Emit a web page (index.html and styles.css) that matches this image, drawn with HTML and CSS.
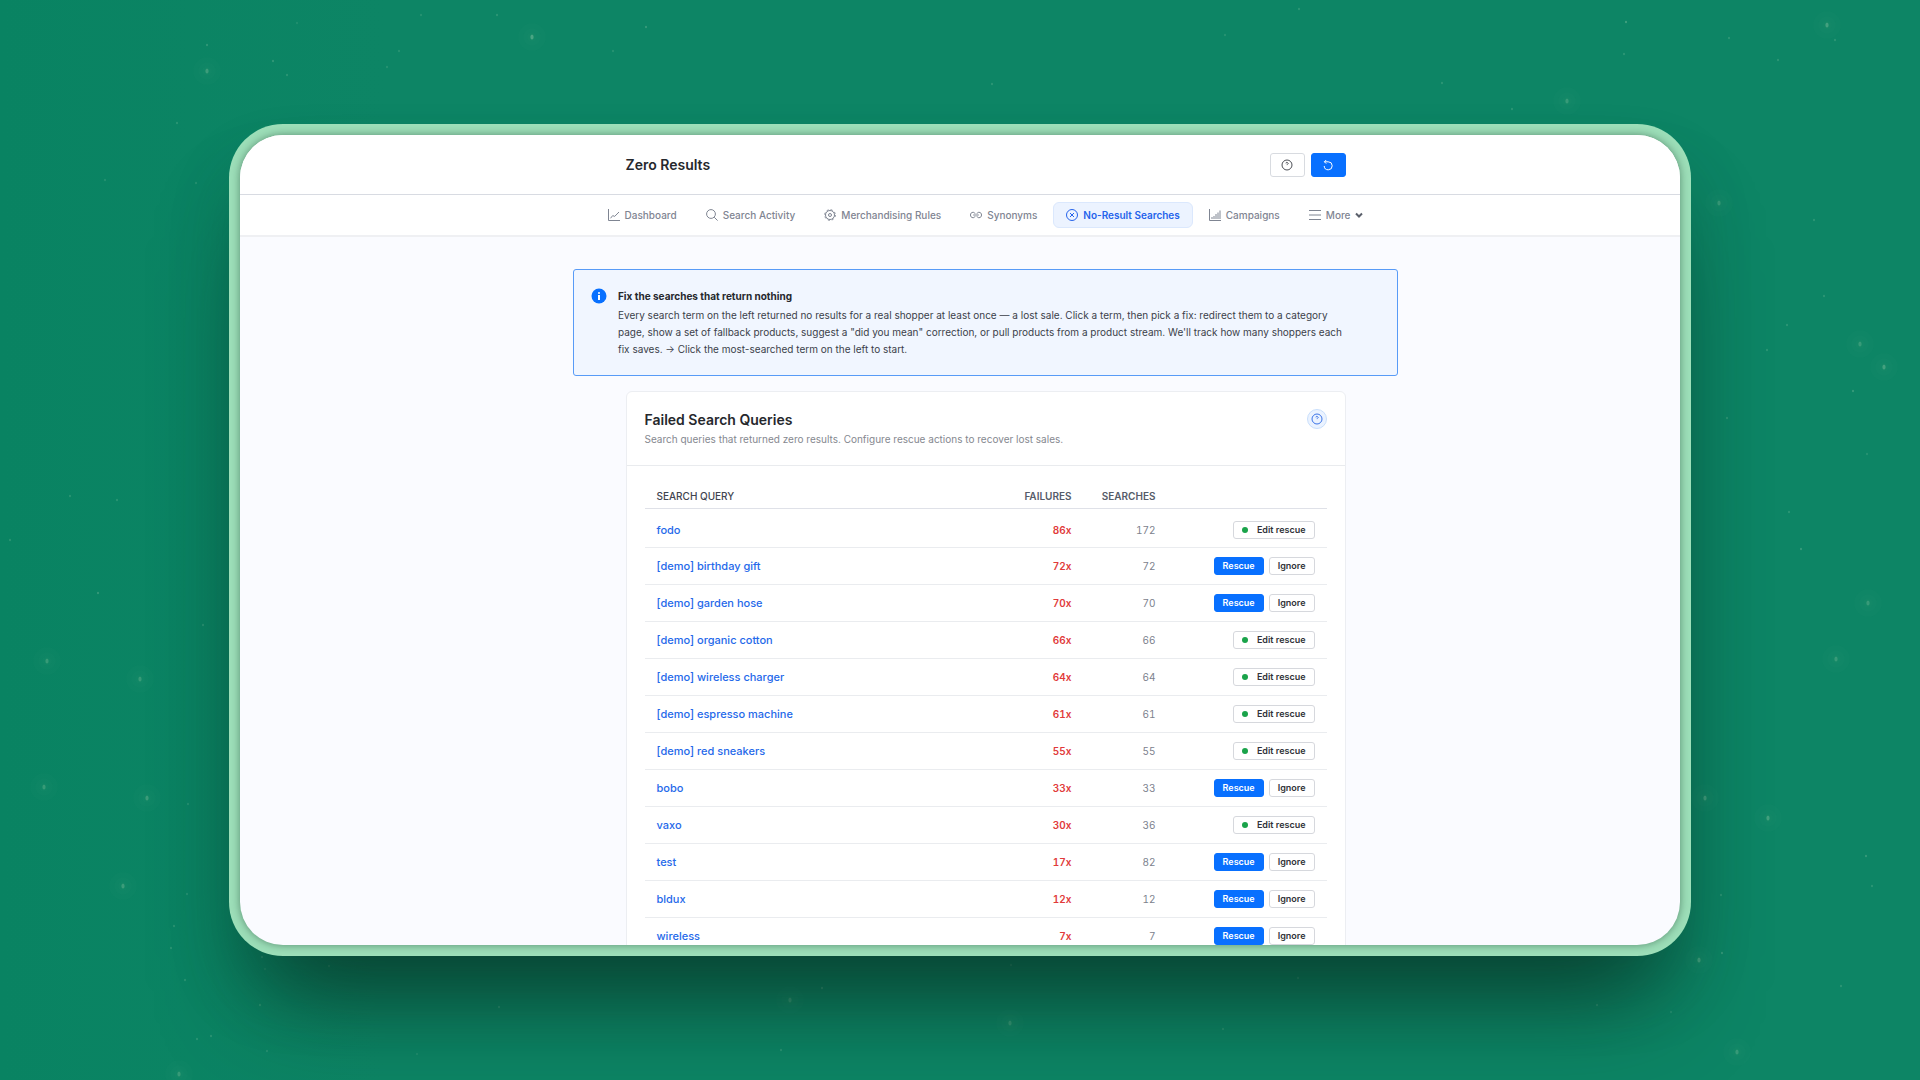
FILE: index.html
```html
<!DOCTYPE html>
<html lang="en">
<head>
<meta charset="utf-8">
<title>Zero Results</title>
<link rel="stylesheet" href="styles.css">
</head>
<body>
<svg class="stars" viewBox="0 0 1920 1080" preserveAspectRatio="xMidYMid slice" aria-hidden="true" id="stars"></svg>
<div class="stage">
<div class="frame">
<div class="app">
  <header class="topbar">
    <div class="column topbar-row">
      <h1 class="page-title">Zero Results</h1>
      <div class="topbar-actions">
        <button class="icon-btn" type="button" aria-label="Help"><svg viewBox="0 0 12 12"><circle cx="6" cy="6" r="5"/><path d="M5 4.400a1 1 0 1 1 1.500.9c-.4.200-.5.400-.5.800"/></svg></button>
        <button class="icon-btn icon-btn-primary" type="button" aria-label="Reload"><svg viewBox="0 0 12 12"><path d="M2.400 2.800H6.200a4 4 0 1 1-4 4.200M4.200 1 2.400 2.800l1.800 1.800"/></svg></button>
      </div>
    </div>
  </header>
  <nav class="nav">
    <a class="nav-item" href="#"><svg viewBox="0 0 12 12"><path d="M.5 0v11.500H12M2.500 9.300l2.200-2.700 2 .8L11 3"/></svg>Dashboard</a>
    <a class="nav-item" href="#"><svg viewBox="0 0 12 12"><circle cx="5" cy="5" r="4.400"/><path d="m8.200 8.200 3.400 3.400"/></svg>Search Activity</a>
    <a class="nav-item" href="#"><svg viewBox="0 0 12 12"><circle cx="6" cy="6" r="4.500"/><circle cx="6" cy="6" r="5.300" stroke-dasharray="2.080 2.080"/><circle cx="6" cy="6" r="1.500"/></svg>Merchandising Rules</a>
    <a class="nav-item" href="#"><svg viewBox="0 0 12 12"><path d="M5 7.200C4.800 8.300 4.100 8.700 3 8.700 1.300 8.700.5 7.500.5 6S1.300 3.300 3 3.300c1.100 0 1.800.4 2 1.500M7 4.800c.2-1.100.9-1.500 2-1.500 1.700 0 2.500 1.200 2.500 2.700S10.700 8.700 9 8.700c-1.100 0-1.800-.4-2-1.500M3.200 6h5.600"/></svg>Synonyms</a>
    <a class="nav-item nav-item-active" href="#" aria-current="page"><svg viewBox="0 0 12 12"><circle cx="6" cy="6" r="5.500"/><path d="m4 4 4 4m0-4L4 8"/></svg>No-Result Searches</a>
    <a class="nav-item" href="#"><svg viewBox="0 0 12 12"><path d="M.5 0v11.500H12M3 8v2m2-3v3m2-5v5m2-6.500V10m2-8.500V10"/></svg>Campaigns</a>
    <button class="nav-item" type="button"><svg viewBox="0 0 12 12"><path d="M0 1.500h12M0 6h12M0 10.500h12"/></svg>More<svg class="chevron" viewBox="0 0 8 8"><path d="m1 2.500 3 3 3-3"/></svg></button>
  </nav>
  <main class="content">
    <section class="notice">
      <svg class="notice-icon" viewBox="0 0 16 16" aria-hidden="true"><circle cx="8" cy="8" r="7.500" fill="#0870ff"/><circle cx="8" cy="5" r="1" fill="#fff"/><path d="M7 7h2v5H7z" fill="#fff"/></svg>
      <div>
        <h2 class="notice-title">Fix the searches that return nothing</h2>
        <p class="notice-text">Every search term on the left returned no results for a real shopper at least once — a lost sale. Click a term, then pick a fix: redirect them to a category page, show a set of fallback products, suggest a "did you mean" correction, or pull products from a product stream. We'll track how many shoppers each fix saves. → Click the most-searched term on the left to start.</p>
      </div>
    </section>
    <section class="column card">
      <div class="card-head">
        <div>
          <h2 class="card-title">Failed Search Queries</h2>
          <p class="card-sub">Search queries that returned zero results. Configure rescue actions to recover lost sales.</p>
        </div>
        <button class="help" type="button" aria-label="Help"><svg viewBox="0 0 12 12"><circle cx="6" cy="6" r="5"/><path d="M5 4.400a1 1 0 1 1 1.500.9c-.4.200-.5.400-.5.800"/></svg></button>
      </div>
      <div class="card-body">
        <table class="queries">
          <thead><tr><th>Search query</th><th class="num">Failures</th><th class="num">Searches</th><th class="acts"></th></tr></thead>
          <tbody>
            <tr><td><a href="#">fodo</a></td><td class="num fail">86x</td><td class="num">172</td><td class="acts"><button class="btn" type="button"><span class="dot"></span>Edit rescue</button></td></tr>
            <tr><td><a href="#">[demo] birthday gift</a></td><td class="num fail">72x</td><td class="num">72</td><td class="acts"><button class="btn btn-primary" type="button">Rescue</button><button class="btn" type="button">Ignore</button></td></tr>
            <tr><td><a href="#">[demo] garden hose</a></td><td class="num fail">70x</td><td class="num">70</td><td class="acts"><button class="btn btn-primary" type="button">Rescue</button><button class="btn" type="button">Ignore</button></td></tr>
            <tr><td><a href="#">[demo] organic cotton</a></td><td class="num fail">66x</td><td class="num">66</td><td class="acts"><button class="btn" type="button"><span class="dot"></span>Edit rescue</button></td></tr>
            <tr><td><a href="#">[demo] wireless charger</a></td><td class="num fail">64x</td><td class="num">64</td><td class="acts"><button class="btn" type="button"><span class="dot"></span>Edit rescue</button></td></tr>
            <tr><td><a href="#">[demo] espresso machine</a></td><td class="num fail">61x</td><td class="num">61</td><td class="acts"><button class="btn" type="button"><span class="dot"></span>Edit rescue</button></td></tr>
            <tr><td><a href="#">[demo] red sneakers</a></td><td class="num fail">55x</td><td class="num">55</td><td class="acts"><button class="btn" type="button"><span class="dot"></span>Edit rescue</button></td></tr>
            <tr><td><a href="#">bobo</a></td><td class="num fail">33x</td><td class="num">33</td><td class="acts"><button class="btn btn-primary" type="button">Rescue</button><button class="btn" type="button">Ignore</button></td></tr>
            <tr><td><a href="#">vaxo</a></td><td class="num fail">30x</td><td class="num">36</td><td class="acts"><button class="btn" type="button"><span class="dot"></span>Edit rescue</button></td></tr>
            <tr><td><a href="#">test</a></td><td class="num fail">17x</td><td class="num">82</td><td class="acts"><button class="btn btn-primary" type="button">Rescue</button><button class="btn" type="button">Ignore</button></td></tr>
            <tr><td><a href="#">bldux</a></td><td class="num fail">12x</td><td class="num">12</td><td class="acts"><button class="btn btn-primary" type="button">Rescue</button><button class="btn" type="button">Ignore</button></td></tr>
            <tr><td><a href="#">wireless</a></td><td class="num fail">7x</td><td class="num">7</td><td class="acts"><button class="btn btn-primary" type="button">Rescue</button><button class="btn" type="button">Ignore</button></td></tr>
          </tbody>
        </table>
      </div>
    </section>
  </main>
</div>
</div>
</div>
<script src="stars.js"></script>
</body>
</html>
```
FILE: styles.css
```css
* { box-sizing: border-box; }
body {
  margin: 0;
  font-family: Inter, "Liberation Sans", sans-serif;
  background: linear-gradient(90deg, #098362, #0d8565 20%, #0d8565);
  color: #26282d;
}
h1, h2, p { margin: 0; }
button { font-family: inherit; cursor: pointer; }
a { color: inherit; text-decoration: none; }
svg { display: block; }

.stars { position: absolute; inset: 0; width: 100%; height: 100%; }
.star { fill: #8fc9a8; }

.stage { display: flex; height: 100vh; padding: 124px 229px; }
.frame {
  position: relative;
  flex: 1;
  display: flex;
  padding: 11px;
  border-radius: 54px;
  background: #9ddfb9;
  box-shadow: 0 74px 100px -36px rgba(8, 42, 28, .7), 0 40px 60px rgba(0, 70, 60, .24);
}
.app {
  flex: 1;
  overflow: hidden;
  border-radius: 43px;
  background: #fafbff;
  box-shadow: 0 0 8px rgba(20, 60, 40, .5);
}

.column { width: 720px; margin: 0 auto; }
.topbar {
  height: 60px;
  padding-left: 51px;
  background: #fff;
  border-bottom: 1px solid #d8dbe2;
}
.topbar-row { display: flex; align-items: center; justify-content: space-between; height: 59px; }
.page-title { font-size: 14px; line-height: 20px; font-weight: 600; }
.topbar-actions { display: flex; gap: 6px; }
.icon-btn {
  display: flex;
  align-items: center;
  justify-content: center;
  width: 35px;
  height: 24px;
  padding: 0;
  border: 1px solid #d8dbe0;
  border-radius: 3px;
  background: #fff;
  color: #4a4d54;
}
.icon-btn svg { width: 12px; height: 12px; fill: none; stroke: currentColor; }
.icon-btn-primary { border-color: #0870ff; background: #0870ff; color: #fff; }

.nav {
  display: flex;
  align-items: center;
  justify-content: center;
  gap: 3px;
  height: 42px;
  padding-left: 51px;
  background: #fff;
  border-bottom: 2px solid #eff0f3;
}
.nav-item {
  display: flex;
  align-items: center;
  gap: 5px;
  height: 26px;
  padding: 0 12px;
  border: 1px solid transparent;
  border-radius: 6px;
  background: none;
  color: #7f8592;
  font-size: 10px;
  font-weight: 500;
}
.nav-item svg { width: 12px; height: 12px; fill: none; stroke: currentColor; }
.nav-item .chevron { width: 8px; height: 8px; stroke: #5b606b; stroke-width: 2; }
.nav-item-active { border-color: #dbe8fd; background: #ecf3ff; color: #2563eb; font-weight: 600; }

.content { padding: 32px 0 0 51px; }
.notice {
  display: flex;
  gap: 11px;
  width: 825px;
  margin: 0 auto 15px;
  padding: 18px 17px 17px;
  border: 1px solid #589bf7;
  border-radius: 3px;
  background: #f1f6ff;
}
.notice-icon { flex: none; width: 16px; height: 16px; }
.notice-title { margin-bottom: 3px; font-size: 10px; line-height: 16px; font-weight: 700; }
.notice-text { max-width: 730px; font-size: 10px; line-height: 17px; color: #3b3f4a; }

.card { border: 1px solid #eceef2; border-radius: 6px; background: #fff; }
.card-head {
  display: flex;
  justify-content: space-between;
  height: 74px;
  padding: 17px 18px;
  border-bottom: 1px solid #e9ebee;
}
.card-title { font-size: 14px; line-height: 22px; font-weight: 600; }
.card-sub { font-size: 10px; line-height: 16px; color: #85888f; }
.help {
  display: flex;
  align-items: center;
  justify-content: center;
  width: 20px;
  height: 20px;
  padding: 0;
  border: 1px solid #c9dffc;
  border-radius: 50%;
  background: #ebf3ff;
  color: #3b74e8;
}
.help svg { width: 12px; height: 12px; fill: none; stroke: currentColor; }
.card-body { padding: 18px; }

.queries { width: 100%; border-collapse: separate; border-spacing: 0; table-layout: fixed; }
.queries th, .queries td { padding: 0 12px; text-align: left; }
.queries th {
  height: 25px;
  border-bottom: 1px solid #dfe1e8;
  font-size: 10px;
  font-weight: 500;
  text-transform: uppercase;
  color: #3f4450;
}
.queries td { height: 37px; border-bottom: 1px solid #eaecef; font-size: 10px; color: #7c818d; }
.queries tbody tr:first-child td { height: 39px; padding-top: 3px; }
.queries td a { font-size: 11px; font-weight: 500; color: #2569ea; }
.queries .num { width: 84px; text-align: right; font-variant-numeric: tabular-nums; }
.queries th.num { font-weight: 600; color: #565c69; }
.queries .fail { font-weight: 600; color: #e13a3a; }
.queries .acts { width: 159px; text-align: right; padding-left: 0; white-space: nowrap; }
.btn {
  height: 18px;
  padding: 0 8px;
  border: 1px solid #d6d8dd;
  border-radius: 3px;
  background: #fff;
  color: #303238;
  font-size: 9px;
  line-height: 16px;
  font-weight: 600;
}
.btn + .btn { margin-left: 5px; }
.btn-primary { border-color: #0870ff; background: #0870ff; color: #fff; }
.dot { display: inline-block; width: 6px; height: 6px; margin-right: 9px; border-radius: 50%; background: #1aa34a; }
```
FILE: stars.js
```js
// Faint specks of the backdrop: x, y, size, opacity
const specks = [
  [532,37,2,.45],[646,27,1,.4],[207,45,1,.35],[207,71,2,.35],[273,61,1,.35],[287,75,1,.3],[297,23,1,.2],[399,51,1,.25],[387,67,1,.25],
  [421,15,1,.25],[497,15,1,.3],[177,123,1,.3],[196,183,1,.25],[613,51,1,.25],[105,180,1,.25],[824,143,1,.3],
  [992,84,1,.3],[1225,35,1,.25],[1299,9,1,.3],[1442,83,1,.3],[1512,109,1,.3],[1567,101,2,.3],[1626,22,1,.5],[1624,54,1,.3],[1729,38,1,.3],
  [1827,25,2,.4],[1835,40,1,.3],[1778,60,1,.3],[1719,203,2,.3],[1814,220,1,.3],[1824,296,1,.3],[1860,344,2,.3],[1884,367,2,.4],[1853,391,1,.4],
  [1787,325,1,.3],[1767,350,1,.3],[1727,418,1,.3],[1867,454,1,.25],[1789,512,1,.3],[1801,549,1,.4],[1868,603,2,.3],[1836,659,2,.3],
  [70,496,1,.3],[117,500,1,.3],[10,540,1,.3],[98,593,1,.4],[47,661,2,.3],[140,679,2,.3],[203,625,1,.3],[44,787,2,.3],[147,798,2,.35],[188,804,1,.25],
  [123,886,2,.35],[187,894,1,.25],[174,926,1,.3],[171,948,1,.3],[185,980,1,.3],[211,1036,1,.3],[197,1039,1,.3],[179,1074,2,.3],[260,1005,1,.3],
  [329,966,1,.3],[262,957,1,.3],[265,969,1,.2],[267,1051,1,.25],[499,1007,1,.3],[417,1054,1,.2],
  [1705,798,2,.4],[1768,818,2,.4],[1866,856,1,.4],[1721,895,1,.3],[1699,960,2,.4],[1722,953,1,.4],[1872,886,1,.3],
  [1841,986,1,.3],[1737,1052,2,.3],[1671,1012,1,.25],[1597,1005,1,.3],[790,1000,2,.3],[822,988,1,.4],[781,1050,1,.3],[1010,1023,2,.3],
  [1011,965,1,.3],[1223,1029,1,.25],[1298,978,1,.3]
];
const layer = document.getElementById('stars');
function addSpeck(x, y, rx, ry, opacity) {
  const star = document.createElementNS('http://www.w3.org/2000/svg', 'ellipse');
  star.setAttribute('class', 'star');
  star.setAttribute('cx', x);
  star.setAttribute('cy', y);
  star.setAttribute('rx', rx);
  star.setAttribute('ry', ry);
  star.setAttribute('opacity', opacity);
  layer.appendChild(star);
}
for (const [x, y, size, opacity] of specks) {
  addSpeck(x, y, size * 0.8, size * 1.3, opacity);
  if (size > 1) {
    for (const halo of [5, 9, 14]) addSpeck(x, y, halo, halo, 0.02);
  }
}
```
